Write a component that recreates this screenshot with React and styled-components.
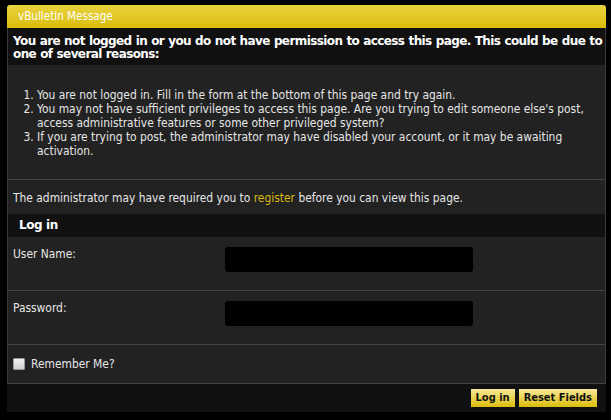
import styled, { createGlobalStyle } from "styled-components";

const GlobalStyle = createGlobalStyle`
  body {
    margin: 0;
    background: #000;
    font-family: "DejaVu Sans Condensed", "DejaVu Sans", sans-serif;
  }
`;

const Panel = styled.div`
  width: 599px;
  margin: 5px 0 0 7px;
`;

const PanelHead = styled.div`
  height: 23px;
  line-height: 23px;
  padding-left: 11px;
  font-size: 11.6px;
  color: #fff;
  background: linear-gradient(#e9d23f, #dbbd0c);
  border-radius: 3px 3px 0 0;
`;

const PanelBody = styled.div`
  border-left: 1px solid #3a3a3a;
  border-right: 1px solid #3a3a3a;
  background: #222;
  color: #e6e6e6;
  font-size: 11.9px;
`;

const Intro = styled.div`
  background: #111;
  color: #fff;
  font-family: "DejaVu Sans", sans-serif;
  font-weight: bold;
  font-size: 12px;
  letter-spacing: -0.6px;
  word-spacing: 0.5px;
  line-height: 13px;
  height: 37px;
  box-sizing: border-box;
  padding: 7px 0 0 5px;
`;

const Reasons = styled.ol`
  margin: 0;
  padding: 23px 10px 21px 29px;
  line-height: 14px;
  border-bottom: 1px solid #444;
`;

const Note = styled.div`
  padding: 11px 5px 9px 5px;
  line-height: 14px;
  a {
    color: #d9b80b;
    text-decoration: none;
  }
`;

const Section = styled.div`
  background: #111;
  color: #fff;
  font-family: "DejaVu Sans", sans-serif;
  font-weight: bold;
  font-size: 12px;
  letter-spacing: -0.4px;
  height: 23px;
  line-height: 23px;
  padding-left: 11px;
`;

const Row = styled.div`
  display: flex;
  align-items: flex-start;
  height: 54px;
  padding-top: 10px;
  box-sizing: border-box;
  border-bottom: 1px solid #444;
`;

const Label = styled.label`
  width: 212px;
  padding-left: 5px;
  line-height: 14px;
`;

const Field = styled.input`
  width: 248px;
  height: 25px;
  box-sizing: border-box;
  background: #000;
  border: none;
  border-radius: 3px;
  outline: none;
`;

const Check = styled.input`
  appearance: none;
  width: 12px;
  height: 12px;
  margin: 0 6px 0 5px;
  background: linear-gradient(#f2f2f2, #cfcfcf);
  border: 1px solid #999;
  border-radius: 1px;
  box-sizing: border-box;
`;

const CheckRow = styled.div`
  display: flex;
  align-items: center;
  height: 39px;
  box-sizing: border-box;
  border-bottom: 1px solid #444;
`;

const Footer = styled.div`
  display: flex;
  justify-content: flex-end;
  gap: 4px;
  background: #111;
  height: 28px;
  padding: 5px 9px 0 0;
  box-sizing: border-box;
`;

const Button = styled.button`
  height: 18px;
  padding: 0 5px;
  border: none;
  background: linear-gradient(#f6e99a, #dcbd0b);
  color: #111;
  font-family: inherit;
  font-weight: bold;
  font-size: 11px;
  line-height: 18px;
`;

export default function App() {
  return (
    <>
      <GlobalStyle />
      <Panel>
        <PanelHead>vBulletin Message</PanelHead>
        <PanelBody>
          <Intro>
            You are not logged in or you do not have permission to access this
            page. This could be due to one of several reasons:
          </Intro>
          <Reasons>
            <li>
              You are not logged in. Fill in the form at the bottom of this page
              and try again.
            </li>
            <li>
              You may not have sufficient privileges to access this page. Are
              you trying to edit someone else's post, access administrative
              features or some other privileged system?
            </li>
            <li>
              If you are trying to post, the administrator may have disabled
              your account, or it may be awaiting activation.
            </li>
          </Reasons>
          <Note>
            The administrator may have required you to <a href="#">register</a>{" "}
            before you can view this page.
          </Note>
          <Section>Log in</Section>
          <Row>
            <Label>User Name:</Label>
            <Field type="text" />
          </Row>
          <Row>
            <Label>Password:</Label>
            <Field type="password" />
          </Row>
          <CheckRow>
            <Check type="checkbox" />
            Remember Me?
          </CheckRow>
        </PanelBody>
        <Footer>
          <Button>Log in</Button>
          <Button>Reset Fields</Button>
        </Footer>
      </Panel>
    </>
  );
}
